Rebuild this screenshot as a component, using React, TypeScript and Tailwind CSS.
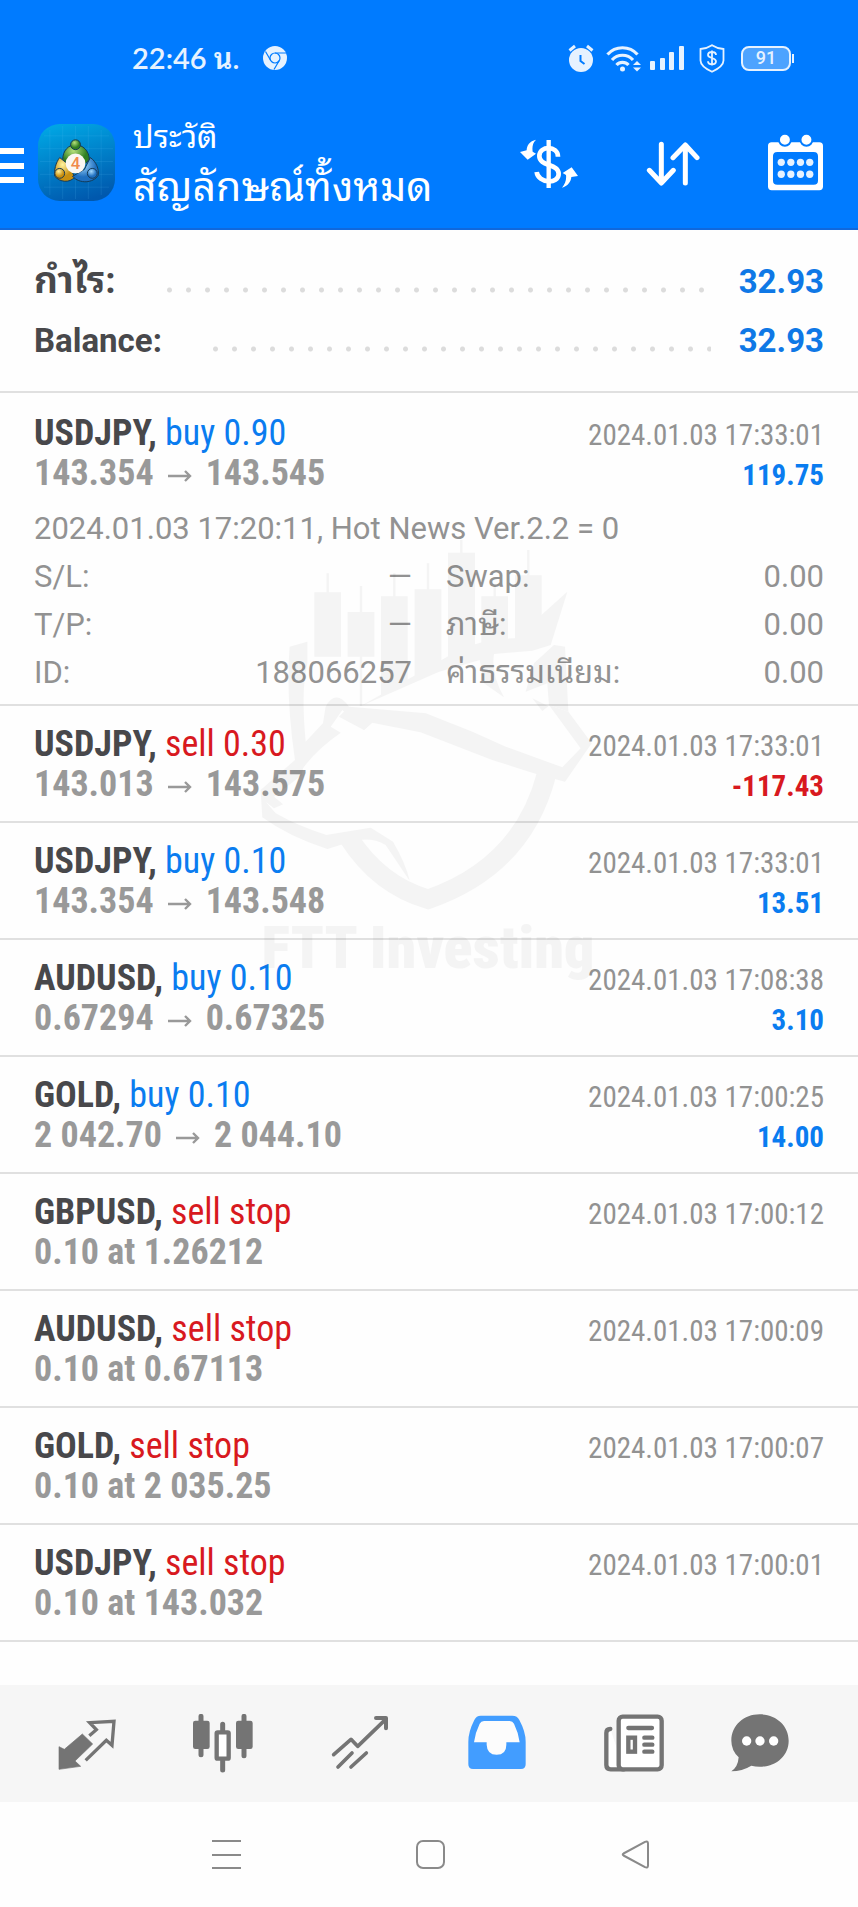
import type { ReactNode } from "react";

type Deal = {
  symbol: string;
  side: "buy" | "sell";
  action: string;
  info: ReactNode;
  time: string;
  profit?: string;
};

const condensed = "font-['Roboto_Condensed','Liberation_Sans_Narrow',sans-serif]";

function Move({ from, to }: { from: string; to: string }) {
  return (
    <>
      {from}
      <svg viewBox="0 0 24 14" className="mx-[14px] inline-block h-[14px] w-6" fill="none" stroke="currentColor" strokeWidth="2.4">
        <path d="M0 8h22M17 3l5 5-5 5" />
      </svg>
      {to}
    </>
  );
}

const deals: Deal[] = [
  { symbol: "USDJPY", side: "sell", action: "sell 0.30", info: <Move from="143.013" to="143.575" />, time: "2024.01.03 17:33:01", profit: "-117.43" },
  { symbol: "USDJPY", side: "buy", action: "buy 0.10", info: <Move from="143.354" to="143.548" />, time: "2024.01.03 17:33:01", profit: "13.51" },
  { symbol: "AUDUSD", side: "buy", action: "buy 0.10", info: <Move from="0.67294" to="0.67325" />, time: "2024.01.03 17:08:38", profit: "3.10" },
  { symbol: "GOLD", side: "buy", action: "buy 0.10", info: <Move from="2 042.70" to="2 044.10" />, time: "2024.01.03 17:00:25", profit: "14.00" },
  { symbol: "GBPUSD", side: "sell", action: "sell stop", info: "0.10 at 1.26212", time: "2024.01.03 17:00:12" },
  { symbol: "AUDUSD", side: "sell", action: "sell stop", info: "0.10 at 0.67113", time: "2024.01.03 17:00:09" },
  { symbol: "GOLD", side: "sell", action: "sell stop", info: "0.10 at 2 035.25", time: "2024.01.03 17:00:07" },
  { symbol: "USDJPY", side: "sell", action: "sell stop", info: "0.10 at 143.032", time: "2024.01.03 17:00:01" },
];

const openDeal: Deal = {
  symbol: "USDJPY",
  side: "buy",
  action: "buy 0.90",
  info: <Move from="143.354" to="143.545" />,
  time: "2024.01.03 17:33:01",
  profit: "119.75",
};

function DealLines({ deal }: { deal: Deal }) {
  return (
    <div className={condensed}>
      <div className="flex h-10 items-baseline justify-between text-[36px] leading-10">
        <p className={deal.side === "buy" ? "text-[#0a7cf0]" : "text-[#d81920]"}>
          <span className="font-bold text-[#48484b]">{deal.symbol},</span> {deal.action}
        </p>
        <time className="text-[29px] text-[#929292]">{deal.time}</time>
      </div>
      <div className="flex h-10 items-baseline justify-between text-[36px] leading-10">
        <p className="font-bold text-[#999999]">{deal.info}</p>
        {deal.profit && (
          <p className={`text-[29px] font-bold ${deal.profit.startsWith("-") ? "text-[#d81920]" : "text-[#0a7cf0]"}`}>
            {deal.profit}
          </p>
        )}
      </div>
    </div>
  );
}

function Detail({ label, value }: { label: string; value: string }) {
  return (
    <div className="flex h-12 justify-between">
      <dt>{label}</dt>
      <dd>{value}</dd>
    </div>
  );
}

function SummaryRow({ label, value, labelSize = "" }: { label: string; value: string; labelSize?: string }) {
  return (
    <div className="flex h-[60px] items-baseline text-[33px] leading-[60px] font-bold">
      <dt className={`text-[#48484b] ${labelSize}`}>{label}</dt>
      <span className="mr-7 mb-px ml-11 h-[6px] flex-1 bg-[radial-gradient(circle,#dcdcdc_2px,transparent_3px)] bg-[length:19px_6px] bg-repeat-x" />
      <dd className="text-[#0f78e6]">{value}</dd>
    </div>
  );
}

function StatusBar() {
  return (
    <div className="flex h-[116px] items-center justify-between pr-[64px] pl-[132px] text-[#e6f2ff]">
      <div className="flex items-center gap-6">
        <span className="font-['Lato','Noto_Sans_Thai_Looped','Loma','Noto_Sans',sans-serif] text-[29px] leading-9 font-semibold">22:46 น.</span>
        <svg viewBox="0 0 24 24" className="size-6">
          <circle cx="12" cy="12" r="12" fill="currentColor" />
          <g fill="none" stroke="#007bff" strokeWidth="1.2">
            <circle cx="12" cy="12" r="5" />
            <path d="M12 7h11M7.700 14.500 2.500 5.500M16.300 14.500 11 23.500" />
          </g>
        </svg>
      </div>
      <div className="flex items-center">
        <svg viewBox="0 0 26 28" className="h-7 w-[26px]">
          <circle cx="13" cy="16" r="12" fill="currentColor" />
          <path d="M1.500 6.500 7 2M24.500 6.500 19 2" stroke="currentColor" strokeWidth="3" />
          <path d="M12.500 11v6l4 3" fill="none" stroke="#007bff" strokeWidth="2" />
        </svg>
        <svg viewBox="0 0 36 28" className="ml-3 h-7 w-9" fill="none" stroke="currentColor" strokeWidth="3.2">
          <path d="M1.500 10.500a20 20 0 0 1 30 0M6 16a14 14 0 0 1 21 0M10.500 21a8 8 0 0 1 12 0" />
          <circle cx="16.500" cy="25" r="2.500" fill="currentColor" stroke="none" />
          <path d="m27 21 4-4 4 4zM27 23.500l4 4 4-4z" fill="currentColor" stroke="none" />
        </svg>
        <svg viewBox="0 0 35 26" className="ml-2 h-[26px] w-[35px]" fill="currentColor">
          <rect y="16" width="5" height="9" rx="1" />
          <rect x="10" y="13" width="5" height="12" rx="1" />
          <rect x="19" y="7" width="5" height="18" rx="1" />
          <rect x="29" y="1" width="5" height="24" rx="1" />
        </svg>
        <svg viewBox="0 0 26 29" className="ml-[14px] h-[29px] w-[26px]" fill="none" stroke="currentColor" strokeWidth="1.800">
          <path d="M13 1.200c3 2 7 3.300 11.500 3.800v11.500c0 5-6 8.700-11.500 11.300C7.500 25.200 1.500 21.500 1.500 16.500V5C6 4.500 10 3.200 13 1.200z" />
          <path d="M17 11c0-4-8-4-8 0 0 3.500 8 2.500 8 6.300 0 4-8 4-8 0M13 6.500v15" />
        </svg>
        <span className="ml-4 flex h-[25px] w-[50px] items-center justify-center rounded-lg border-2 border-current bg-white/30 font-['Roboto',sans-serif] text-lg leading-5 font-medium">
          91
        </span>
        <span className="ml-px h-[9px] w-[2px] bg-current" />
      </div>
    </div>
  );
}

function AppLogo() {
  return (
    <svg viewBox="0 0 78 78" className="ml-[14px] size-[77px]">
      <defs>
        <linearGradient id="tile" x1="0.300" y1="0" x2="0.600" y2="1">
          <stop offset="0" stopColor="#00a5e3" />
          <stop offset="1" stopColor="#0058ad" />
        </linearGradient>
        <radialGradient id="green" cx="0.400" cy="0.300">
          <stop offset="0" stopColor="#b6e07a" />
          <stop offset="1" stopColor="#2f7f22" />
        </radialGradient>
        <radialGradient id="gold" cx="0.400" cy="0.300">
          <stop offset="0" stopColor="#fff3a0" />
          <stop offset="1" stopColor="#c98f10" />
        </radialGradient>
        <radialGradient id="sky" cx="0.400" cy="0.300">
          <stop offset="0" stopColor="#a8dcff" />
          <stop offset="1" stopColor="#1f6fc0" />
        </radialGradient>
      </defs>
      <rect width="78" height="78" rx="22" fill="url(#tile)" />
      <path d="M12 6v66M25 2v74M38 2v74M51 2v74M64 6v66M6 12h66M2 25h74M2 38h74M2 51h74M6 64h66" stroke="#5cc4f5" strokeOpacity="0.150" />
      <g stroke="#153a55" strokeWidth="1">
        <path d="M25 36c0-9 6-15 13-15s14 6 14 15l-6 6H31z" fill="url(#green)" />
        <path d="M22 34c-4 5-6 13-5 19 5 6 15 7 20 1l-5-12z" fill="url(#gold)" />
        <path d="M53 34c6 4 9 12 8 18-5 8-19 9-26 1l12-7z" fill="url(#sky)" />
        <circle cx="38" cy="21" r="5" fill="url(#green)" />
        <circle cx="22" cy="50" r="5" fill="url(#gold)" />
        <circle cx="55" cy="50" r="5" fill="url(#sky)" />
      </g>
      <circle cx="38" cy="40" r="10" fill="#fbf7f2" />
      <text x="38" y="46" textAnchor="middle" fontFamily="Roboto, sans-serif" fontSize="17" fontWeight="500" fill="#f08a4b">
        4
      </text>
    </svg>
  );
}

function AppBar() {
  return (
    <div className="flex h-[112px] text-white">
      <button type="button" aria-label="Menu" className="mt-8 flex h-[35px] w-6 flex-col justify-between">
        <span className="h-[6px] w-full bg-white" />
        <span className="h-[6px] w-full bg-white" />
        <span className="h-[6px] w-full bg-white" />
      </button>
      <div className="mt-2">
        <AppLogo />
      </div>
      <div className="ml-[18px] flex-1">
        <p className="text-[32px] leading-[42px]">ประวัติ</p>
        <h1 className="text-[41px] leading-[58px] whitespace-nowrap">สัญลักษณ์ทั้งหมด</h1>
      </div>
      <div className="mt-[18px] flex gap-[68px] pr-[35px]">
        <button type="button" aria-label="Currency" className="h-[58px] w-[58px]">
          <svg viewBox="268 402 174 174" className="size-full" fill="none" stroke="currentColor">
            <path d="M354 420v144" strokeWidth="13" />
            <path d="M382 470c0-34-56-34-56-2 0 32 58 22 58 54 0 32-62 28-66-6" strokeWidth="14" />
            <path d="m268 456 20-5c0-14 9-28 28-32-10 9-12 22-10 36l10 6-25 18zM442 528l-20 3c-1 14-11 28-28 32 9-10 14-24 12-38l-10-6 27-17z" fill="currentColor" stroke="none" />
          </svg>
        </button>
        <button type="button" aria-label="Sort" className="h-[58px] w-[54px]">
          <svg viewBox="645 402 162 174" className="size-full" fill="none" stroke="currentColor" strokeWidth="15" strokeLinecap="round" strokeLinejoin="round">
            <path d="M691 433v114M655 511l36 38 36-38M763 549V435M726 473l37-38 35 38" />
          </svg>
        </button>
        <button type="button" aria-label="Calendar" className="h-[58px] w-[55px]">
          <svg viewBox="1011 402 166 174" className="size-full" fill="currentColor">
            <path d="M1022 426h144q11 0 11 11v123q0 11-11 11h-144q-11 0-11-11V437q0-11 11-11zm17 30q-13 0-13 13v73q0 13 13 13h110q13 0 13-13v-73q0-13-13-13z" fillRule="evenodd" />
            <circle cx="1062" cy="419" r="18" stroke="#007bff" strokeWidth="6" />
            <circle cx="1127" cy="419" r="18" stroke="#007bff" strokeWidth="6" />
            {[1051, 1080, 1109, 1137].map((x) => (
              <g key={x} opacity="0.900">
                <circle cx={x} cy="487" r="11" />
                <circle cx={x} cy="523" r="11" />
              </g>
            ))}
          </svg>
        </button>
      </div>
    </div>
  );
}

function Watermark() {
  return (
    <svg viewBox="0 0 1140 1380" className="pointer-events-none absolute top-[300px] left-1/2 h-[460px] w-[380px] -translate-x-1/2 opacity-[0.035]" aria-hidden="true">
      {/* candles */}
      <path d="M226 187h80v193h-80zM326 246h80v134h-80zM426 199h80v255l-80 46zM527 178h80v220l-80 46zM627 68h81v290l-81 30zM727 199h80v150h-80zM828 136h80v140l-80 70z" />
      <path d="M266 130v60M366 168v360M466 130v70M567 100v80M667 30v40M767 170v30M868 60v80" stroke="black" strokeWidth="7" />
      {/* horn and ear */}
      <path d="M366 528 530 435 660 360Q740 325 830 325L985 185 935 345 880 362 765 372Q755 430 795 502L735 460 722 390 600 425z" />
      <path d="M945 345 978 350 988 545 930 525 925 460 860 485 885 400z" />
      <path d="M880 505l48 24-18 14z" />
      {/* brow and muzzle */}
      <path d="M330 530 560 550 700 605 800 650 970 712 1025 655 930 525 988 545 1058 640 978 755 880 728 760 690 545 607 400 578 375 600 300 560z" />
      {/* neck */}
      <path d="M205 335 152 350Q140 500 168 690L65 780 70 862Q150 920 265 957L320 940Q390 915 440 945L512 1052Q500 1000 462 935L395 893 262 915Q180 890 110 850L80 815 105 835 132 823 105 800 188 735 192 715Q230 660 305 608L275 590 310 540 375 600 400 575 330 530Q290 475 260 530L252 580 200 635Q185 480 205 400z" />
      <path d="M922 735Q850 1010 567 1108 420 1065 330 925" fill="none" stroke="black" strokeWidth="58" />
      <text x="567" y="1313" textAnchor="middle" fontSize="180" fontWeight="900" className={condensed}>
        FTT Investing
      </text>
    </svg>
  );
}

function TabBar() {
  return (
    <nav className="mt-[43px] grid h-[117px] grid-cols-[6fr_6fr_6fr_6fr_6fr_5fr] items-center justify-items-center bg-[#f6f6f6] pr-[41px] pl-[18px] text-[#747474]">
      <button type="button" aria-label="Quotes" className="size-[60px]">
        <svg viewBox="168 100 180 180" className="size-full" fill="none" stroke="currentColor" strokeWidth="10">
          <path d="m247 160 31 30-53 51 17 16-65 9v-68l16 8z" fill="currentColor" strokeWidth="2" />
          <path d="m268 165 21-18-20-21 73-4-6 72-17-15-62 60" />
        </svg>
      </button>
      <button type="button" aria-label="Charts" className="size-[60px]">
        <svg viewBox="582 102 180 180" className="size-full" fill="currentColor">
          <rect x="582" y="122" width="50" height="85" rx="7" />
          <rect x="711" y="122" width="50" height="85" rx="7" />
          <path d="M606 109v115M735 109v118M671 133v18M671 242v28" stroke="currentColor" strokeWidth="15" strokeLinecap="round" />
          <rect x="653" y="157" width="36" height="79" rx="3" fill="white" stroke="currentColor" strokeWidth="13" />
        </svg>
      </button>
      <button type="button" aria-label="Trade" className="size-[60px]">
        <svg viewBox="992 102 180 180" className="size-full" fill="none" stroke="currentColor" strokeWidth="11" strokeLinecap="round" strokeLinejoin="round">
          <path d="m1003 224 52-46 20 21 83-80M1016 261l42-42M1055 261l46-42" />
          <path d="M1130 114h30v31" strokeWidth="12" />
        </svg>
      </button>
      <button type="button" aria-label="History" aria-current="page" className="size-[60px] text-[#429dff]">
        <svg viewBox="114 102 180 180" className="size-full" fill="currentColor">
          <path d="M155 107h95q15 0 21 13 19 35 19 65v68q0 14-14 14H132q-14 0-14-14v-68q0-30 18-65 6-13 19-13z" />
          <path d="M165 123h77q9 0 13 8 13 26 17 56h-40v7q0 30-29 30t-30-30v-7h-38q4-30 17-56 4-8 13-8z" fill="#fcfcfc" />
        </svg>
      </button>
      <button type="button" aria-label="News" className="size-[60px]">
        <svg viewBox="527 100 180 180" className="size-full" fill="none" stroke="currentColor" strokeWidth="13" strokeLinecap="round">
          <path d="M546 145q-12 0-12 12v96q0 13 13 13h40" fill="white" />
          <rect x="571" y="108" width="129" height="158" rx="12" fill="white" />
          <path d="M600 142h71M648 171h24M648 192h24M648 213h24" />
          <rect x="600" y="171" width="20" height="42" />
        </svg>
      </button>
      <button type="button" aria-label="Messages" className="size-[60px]">
        <svg viewBox="903 100 180 180" className="size-full">
          <path d="M992 101c49 0 87 33 87 79s-38 78-87 78q-13 0-25-3-28 17-60 17 20-13 22-42-22-21-22-50c0-46 38-79 85-79z" fill="currentColor" />
          <g fill="white">
            <circle cx="953" cy="181" r="14" />
            <circle cx="993" cy="181" r="14" />
            <circle cx="1034" cy="181" r="14" />
          </g>
        </svg>
      </button>
    </nav>
  );
}

function SystemBar() {
  return (
    <div className="grid h-[105px] grid-cols-3 items-center justify-items-center pr-[120px] pl-[124px] text-[#8a8a8a]">
      <button type="button" aria-label="Recent apps" className="flex h-[29px] w-[29px] flex-col justify-between">
        <span className="h-[2px] w-full bg-current" />
        <span className="h-[2px] w-full bg-current" />
        <span className="h-[2px] w-full bg-current" />
      </button>
      <button type="button" aria-label="Home" className="size-[29px] rounded-[7px] border-2 border-current" />
      <button type="button" aria-label="Back" className="size-[29px]">
        <svg viewBox="0 0 29 29" className="size-full" fill="none" stroke="currentColor" strokeWidth="2" strokeLinejoin="round">
          <path d="M2.500 13.500Q1 14.500 2.500 15.500L24 27.200Q27 28.500 27 25.500V3.500Q27 .8 24 1.900z" />
        </svg>
      </button>
    </div>
  );
}

export default function App() {
  return (
    <div className="bg-[#fefefe] font-['Roboto','Noto_Sans_Thai_Looped','Loma','Noto_Sans',sans-serif]">
      <header className="border-b-2 border-[#1068dc] bg-[#007bff]">
        <StatusBar />
        <AppBar />
      </header>

      <main className="relative">
        <dl className="border-b-2 border-[#e0e0e0] px-[34px] pt-[21px] pb-5">
          <SummaryRow label="กำไร:" value="32.93" labelSize="text-[37px]" />
          <SummaryRow label="Balance:" value="32.93" />
        </dl>

        <ul>
          <li className="border-b-2 border-[#e0e0e0] px-[34px] pt-5 pb-[7px]">
            <DealLines deal={openDeal} />
            <div className="mt-3 text-[31px] leading-[48px] text-[#929292]">
              <p className="whitespace-nowrap">2024.01.03 17:20:11, Hot News Ver.2.2 = 0</p>
              <div className="grid grid-cols-2 gap-x-[34px]">
                <dl>
                  <Detail label="S/L:" value="—" />
                  <Detail label="T/P:" value="—" />
                  <Detail label="ID:" value="188066257" />
                </dl>
                <dl>
                  <Detail label="Swap:" value="0.00" />
                  <Detail label="ภาษี:" value="0.00" />
                  <Detail label="ค่าธรรมเนียม:" value="0.00" />
                </dl>
              </div>
            </div>
          </li>
          {deals.map((deal) => (
            <li key={deal.time + deal.profit} className="border-b-2 border-[#e0e0e0] px-[34px] pt-[18px] pb-[17px]">
              <DealLines deal={deal} />
            </li>
          ))}
        </ul>
        <Watermark />
      </main>

      <TabBar />
      <SystemBar />
    </div>
  );
}
